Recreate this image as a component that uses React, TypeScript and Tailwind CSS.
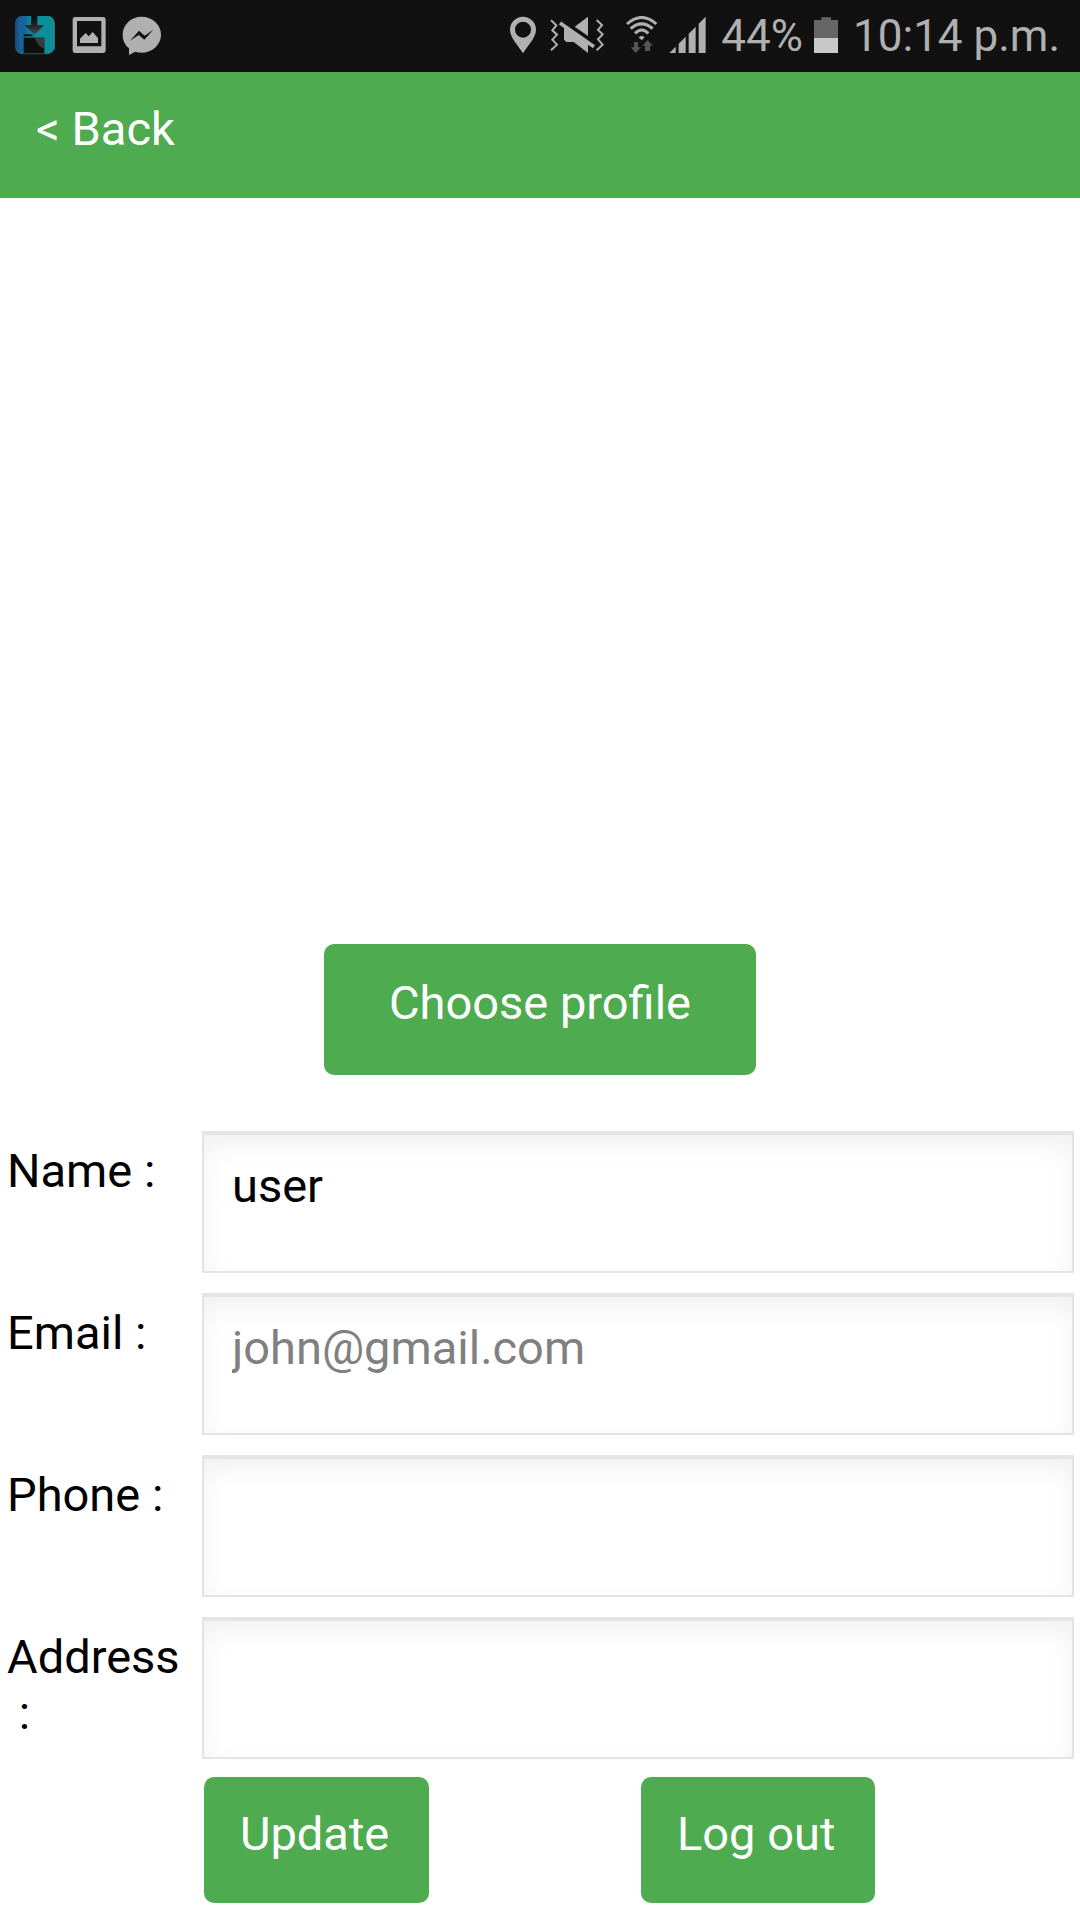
import { useState } from 'react'
import type { ButtonHTMLAttributes } from 'react'

const FIELDS = [
  { id: 'name', label: 'Name :', type: 'text', placeholder: '' },
  { id: 'email', label: 'Email :', type: 'email', placeholder: 'john@gmail.com' },
  { id: 'phone', label: 'Phone :', type: 'tel', placeholder: '' },
  { id: 'address', label: 'Address \u00a0:', type: 'text', placeholder: '' },
]

function AppIcon() {
  return (
    <svg className="h-10 w-[42px]" viewBox="0 0 126 120" aria-hidden="true">
      <defs>
        <linearGradient id="app-teal" x1="0" y1="0" x2="1" y2="0">
          <stop offset="0" stopColor="#174a72" />
          <stop offset="0.12" stopColor="#1b609c" />
          <stop offset="0.25" stopColor="#12689c" />
          <stop offset="0.4" stopColor="#0a8a9c" />
          <stop offset="1" stopColor="#0c9296" />
        </linearGradient>
        <linearGradient id="app-arrow" x1="0" y1="0" x2="0" y2="1">
          <stop offset="0" stopColor="#0c0c0c" />
          <stop offset="0.5" stopColor="#222" />
          <stop offset="1" stopColor="#4c4c4c" />
        </linearGradient>
      </defs>
      <rect x="3" y="0" width="118" height="114" rx="20" fill="url(#app-teal)" />
      <path d="M8 98Q14 112 26 113H102Q116 111 120 98" fill="none" stroke="#35606c" strokeWidth="3" />
      <path d="M51 0H70V28H90L61 56L32 28H51Z" fill="url(#app-arrow)" />
      <path d="M29 65H91V112H29Z" fill="#0f0f0f" />
      <path d="M62 66H91V98Q72 92 62 66Z" fill="#3a3a3a" />
      <path d="M29 55H52L58 61H29Z" fill="#0f0f0f" />
      <path d="M104 1Q121 5 121 24V102" fill="none" stroke="#5f9090" strokeWidth="2" />
    </svg>
  )
}

function GalleryIcon() {
  return (
    <svg className="h-10 w-[34px]" viewBox="0 0 102 120" fill="#b0b0b0" aria-hidden="true">
      <path fillRule="evenodd" d="M10 3H93Q101 3 101 11V103Q101 111 93 111H10Q2 111 2 103V11Q2 3 10 3ZM15 15V91H88V15Z" />
      <path d="M24 81V68L41 51L50 61L62 48L78 66V81Z" />
    </svg>
  )
}

function MessengerIcon() {
  return (
    <svg className="h-10 w-10" viewBox="0 0 120 120" aria-hidden="true">
      <path d="M59 2C91 2 117 26 117 56S91 110 59 110Q49 110 40 107L21 117V97C9 87 2 73 2 56C2 26 27 2 59 2Z" fill="#b0b0b0" />
      <path d="M24 74L51 44L68 59L94 41L67 71L50 57Z" fill="#111" />
    </svg>
  )
}

function PinIcon() {
  return (
    <svg className="h-10 w-7" viewBox="0 0 84 120" fill="#b0b0b0" aria-hidden="true">
      <path fillRule="evenodd" d="M42 112C28 88 3 66 3 41A39 39 0 0 1 81 41C81 66 56 88 42 112ZM42 17A24 24 0 1 0 42 65A24 24 0 1 0 42 17Z" />
    </svg>
  )
}

function VibrateIcon() {
  return (
    <svg className="h-10 w-14" viewBox="0 0 168 120" fill="#b0b0b0" aria-hidden="true">
      <g fill="none" stroke="#b0b0b0" strokeWidth="6">
        <path d="M6 13L22 28L10 43L24 56L10 71L24 86L6 103" />
        <path d="M143 12L159 27L147 42L161 55L147 70L161 86L143 103" />
        <path d="M33 21L135 92" strokeWidth="11" />
      </g>
      <path d="M117 2V60L77 32Z" />
      <path d="M45 32L117 82V111L74 78H52L45 71Z" />
    </svg>
  )
}

function WifiIcon() {
  return (
    <svg className="h-10 w-[34px]" viewBox="0 0 102 120" aria-hidden="true">
      <g fill="none" stroke="#b0b0b0" strokeWidth="9">
        <path d="M6 24Q50 -15 94 24" />
        <path d="M17 38Q50 9 83 38" />
        <path d="M30 52Q50 32 70 52" />
      </g>
      <path d="M41 64Q50 56 59 64L50 73Z" fill="#b0b0b0" />
      <path d="M27 78H39V94H48L32 111L17 94H27Z" fill="#555" />
      <path d="M68 72L83 89H75V105H60V89H52Z" fill="#555" />
    </svg>
  )
}

function SignalIcon() {
  return (
    <svg className="h-10 w-[38px]" viewBox="0 0 114 120" fill="#b0b0b0" aria-hidden="true">
      <path d="M1 111L20 92V111Z" />
      <path d="M29 111V83L50 62V111Z" />
      <path d="M59 111V53L80 32V111Z" />
      <path d="M89 111V23L110 2V111Z" />
    </svg>
  )
}

function BatteryIcon() {
  return (
    <svg className="h-10 w-[26px]" viewBox="0 0 78 120" aria-hidden="true">
      <path d="M25 4H54V12H75V66H3V12H25Z" fill="#666" />
      <path d="M3 66H75V111H3Z" fill="#c8c8c8" />
    </svg>
  )
}

function StatusBar() {
  return (
    <div className="flex h-[72px] items-center justify-between bg-[#111] pl-[14px] pr-5 text-[44px] leading-[56px] text-[#b0b0b0]">
      <div className="flex items-center gap-4">
        <AppIcon />
        <GalleryIcon />
        <MessengerIcon />
      </div>
      <div className="flex items-center gap-3">
        <PinIcon />
        <VibrateIcon />
        <span className="flex items-center gap-[10px] pl-2">
          <WifiIcon />
          <SignalIcon />
        </span>
        <span className="flex items-center gap-[10px] pl-[2px]">
          44%
          <BatteryIcon />
        </span>
        <span className="pl-[2px]">10:14 p.m.</span>
      </div>
    </div>
  )
}

function GreenButton({ className, ...props }: ButtonHTMLAttributes<HTMLButtonElement>) {
  return <button type="button" className={`rounded-[10px] bg-[#4fab50] text-white ${className}`} {...props} />
}

export default function App() {
  const [values, setValues] = useState<Record<string, string>>({
    name: 'user',
    email: '',
    phone: '',
    address: '',
  })

  return (
    <div className="min-h-screen bg-white font-[Roboto,sans-serif] text-[47px] leading-[56px] text-black">
      <StatusBar />

      {/* Header */}
      <header className="bg-[#4fab50] px-9 pt-[29px] pb-[41px] text-white">
        <a href="#back" className="block w-fit">&lt; Back</a>
      </header>

      <main>
        {/* Profile picture, empty until one is chosen */}
        <div className="h-[746px]" />

        <GreenButton className="mx-auto mb-14 block w-2/5 pt-[31px] pb-11">Choose profile</GreenButton>

        <form>
          <div className="flex flex-col gap-5 px-[6px]">
            {FIELDS.map((field) => (
              <div key={field.id} className="flex items-start">
                <label htmlFor={field.id} className="w-[196px] shrink-0 pt-3 pr-4 pl-px">
                  {field.label}
                </label>
                <input
                  id={field.id}
                  type={field.type}
                  value={values[field.id]}
                  placeholder={field.placeholder}
                  onChange={(e) => setValues({ ...values, [field.id]: e.target.value })}
                  className="h-[142px] min-w-0 flex-1 border-2 border-t-4 border-[#e4e4e4] bg-white px-7 pt-[22px] pb-[58px] shadow-[inset_0_10px_24px_rgba(0,0,0,0.06)] outline-none placeholder:text-[#808080]"
                />
              </div>
            ))}
          </div>

          <div className="mt-[18px] grid grid-cols-2 justify-items-start pr-[2px] pl-[204px]">
            <GreenButton className="pt-[29px] pr-10 pb-[41px] pl-9">Update</GreenButton>
            <GreenButton className="pt-[29px] pr-10 pb-[41px] pl-9">Log out</GreenButton>
          </div>
        </form>
      </main>
    </div>
  )
}
